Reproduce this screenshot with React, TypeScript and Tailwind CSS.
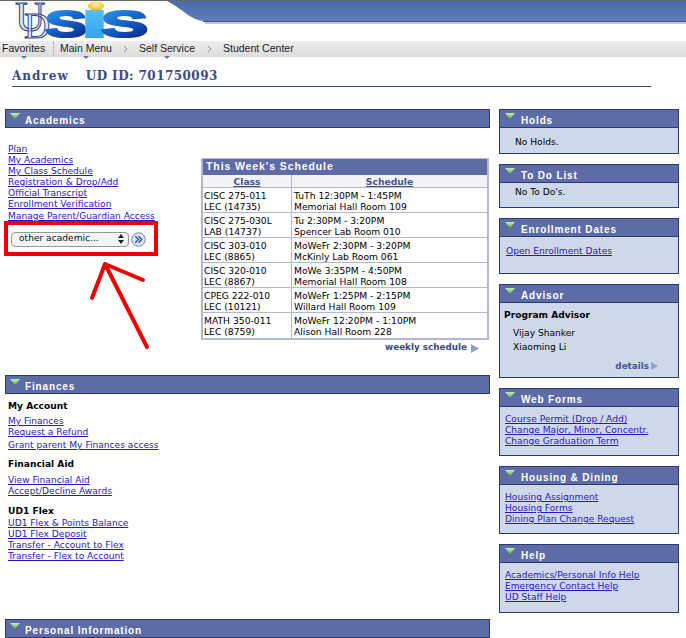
import type { ReactNode } from 'react';

const font = "font-['DejaVu_Sans',Verdana,sans-serif]";
const title = "font-['Liberation_Sans',Arial,sans-serif] text-white font-bold text-[10px] tracking-[0.85px]";

function Tri() {
    return (
        <svg width="10" height="6" viewBox="0 0 10 6" className="shrink-0">
            <defs>
                <linearGradient id="tri" x1="0" y1="0" x2="0" y2="1">
                    <stop offset="0" stopColor="#c4f2b4" />
                    <stop offset="1" stopColor="#4fb04a" />
                </linearGradient>
            </defs>
            <path d="M0 0 L10 0 L5 6 Z" fill="url(#tri)" />
        </svg>
    );
}

function Head({ title: text, right = false }: { title: string; right?: boolean }) {
    return (
        <div className={`h-[19px] flex bg-[#5d6ba6] border border-[#2a3a72] ${right ? 'pl-[5px] gap-[6px]' : 'pl-[4px] gap-[5px]'}`}>
            <div className="pt-[3px]"><Tri /></div>
            <span className={`${title} leading-[21px]`}>{text}</span>
        </div>
    );
}

function L({ children, className = '' }: { children: ReactNode; className?: string }) {
    return <a className={`block w-fit text-[#2a16c8] underline text-[9.1px] leading-[11px] ${className}`}>{children}</a>;
}

function Card({ title, h, children }: { title: string; h: string; children: ReactNode }) {
    return (
        <div className={`${h} bg-[#cdd8ea] border-x border-b border-[#2a3a72]`}>
            <div className="-mx-px"><Head title={title} right /></div>
            {children}
        </div>
    );
}

const rows = [
    ['CISC 275-011', 'LEC (14735)', 'TuTh 12:30PM - 1:45PM', 'Memorial Hall Room 109'],
    ['CISC 275-030L', 'LAB (14737)', 'Tu 2:30PM - 3:20PM', 'Spencer Lab Room 010'],
    ['CISC 303-010', 'LEC (8865)', 'MoWeFr 2:30PM - 3:20PM', 'McKinly Lab Room 061'],
    ['CISC 320-010', 'LEC (8867)', 'MoWe 3:35PM - 4:50PM', 'Memorial Hall Room 108'],
    ['CPEG 222-010', 'LEC (10121)', 'MoWeFr 1:25PM - 2:15PM', 'Willard Hall Room 109'],
    ['MATH 350-011', 'LEC (8759)', 'MoWeFr 12:20PM - 1:10PM', 'Alison Hall Room 228'],
];

function Schedule() {
    return (
        <div className="w-[288px]">
            <div className="border-2 border-[#b0b8d6] border-t border-x-[2px]">
                <div className="h-[16px] bg-[#5d6ba6] font-['Liberation_Sans',Arial,sans-serif] text-white font-bold text-[10.5px] tracking-[0.9px] leading-[15px] pl-[3px]">This Week's Schedule</div>
                <div className="grid grid-cols-[89px_1fr] h-[13px] bg-[#f4f4f4] border-b border-[#b0b8d6] text-[9.2px] font-bold leading-[14px] text-[#44568f] underline text-center">
                    <div className="border-r border-[#b0b8d6]">Class</div>
                    <div>Schedule</div>
                </div>
                {rows.map((r, i) => (
                    <div key={r[0]} className={`grid grid-cols-[89px_1fr] bg-white text-black text-[9.2px] leading-[11px] h-[25px] ${i < 5 ? 'border-b border-[#b0b8d6]' : ''}`}>
                        <div className="border-r border-[#b0b8d6] pl-[1px] pt-[2px]">{r[0]}<br />{r[1]}</div>
                        <div className="pl-[2px] pt-[2px]">{r[2]}<br />{r[3]}</div>
                    </div>
                ))}
            </div>
            <div className="flex justify-end items-center gap-[4px] pr-[10px] mt-[2px] h-[12px] text-[8.8px] font-bold text-[#3b4a80]">
                weekly schedule
                <svg width="8" height="10" viewBox="0 0 8 10"><path d="M0 1 L8 5.5 L0 10 Z" fill="#8ea0cc" /></svg>
            </div>
        </div>
    );
}

function Caret({ className }: { className: string }) {
    return <i className={`absolute top-[13px] border-x-[3px] border-x-transparent border-t-[3px] border-t-[#5a78b8] ${className}`} />;
}

function Chevron() {
    return (
        <span className="w-[15px]">
            <svg width="5" height="8" viewBox="0 0 5 8" className="-ml-[1px]"><path d="M1 1 L4 4 L1 7" fill="none" stroke="#8a8a8a" strokeWidth="1" /></svg>
        </span>
    );
}

export default function App() {
    return (
        <div className={`relative w-[686px] h-[638px] overflow-hidden bg-white ${font}`}>
            {/* top band + logo */}
            <div className="h-[41px] flex border-t border-[#666]">
                <svg width="165" height="40" viewBox="0 0 165 40" className="shrink-0">
                    <defs>
                        <linearGradient id="sis" x1="0" y1="0" x2="0.6" y2="1">
                            <stop offset="0" stopColor="#3aa6f0" />
                            <stop offset="0.45" stopColor="#1a6fd0" />
                            <stop offset="1" stopColor="#0a2a90" />
                        </linearGradient>
                        <linearGradient id="sisI" x1="0" y1="0" x2="0" y2="1">
                            <stop offset="0" stopColor="#5cc6f8" />
                            <stop offset="1" stopColor="#2a9cec" />
                        </linearGradient>
                        <radialGradient id="ball" cx="0.5" cy="0.35" r="0.7">
                            <stop offset="0" stopColor="#fff3a8" />
                            <stop offset="1" stopColor="#e2b21c" />
                        </radialGradient>
                    </defs>
                    <rect x="15" y="0" width="131" height="38" fill="#fdfdf6" />
                    <text x="15" y="30" fontFamily="'Liberation Serif',serif" fontSize="42" fill="#dfe8fb" stroke="#2d3f97" strokeWidth="1">U</text>
                    <text x="24" y="37" fontFamily="'Liberation Serif',serif" fontSize="36" fill="#dfe8fb" fillOpacity="0.6" stroke="#2d3f97" strokeWidth="1">D</text>
                    <g fontFamily="'Liberation Sans',sans-serif" fontWeight="700" fontSize="37" strokeWidth="2.2">
                        <text x="45" y="36" fill="url(#sis)" stroke="url(#sis)" textLength="42" lengthAdjust="spacingAndGlyphs">S</text>
                        <text x="82" y="36" fill="url(#sisI)" stroke="url(#sisI)" textLength="25" lengthAdjust="spacingAndGlyphs">I</text>
                        <text x="101" y="36" fill="url(#sis)" stroke="url(#sis)" textLength="47" lengthAdjust="spacingAndGlyphs">S</text>
                    </g>
                    <ellipse cx="96" cy="5" rx="8" ry="4.5" fill="url(#ball)" />
                </svg>
                <svg className="flex-1 h-[24px]" viewBox="0 0 521 24" preserveAspectRatio="none">
                    <defs>
                        <linearGradient id="band" x1="0" y1="0" x2="0" y2="1">
                            <stop offset="0" stopColor="#4a6aa8" />
                            <stop offset="1" stopColor="#5c80bd" />
                        </linearGradient>
                    </defs>
                    <path d="M2 0 L521 0 L521 20 L40 20 C26 20 18 8 2 0 Z" fill="url(#band)" />
                    <path d="M38 20.5 L521 20.5" stroke="#3d4a96" strokeWidth="1.2" />
                    <path d="M40 22 L521 22" stroke="#b5b5b5" strokeWidth="1.5" />
                </svg>
            </div>

            {/* nav */}
            <div className="h-[16px] bg-gradient-to-b from-[#eeeeee] to-[#dcdcdc] flex items-center pb-[1px] text-[10.5px] text-[#1a1a1a] font-['Liberation_Sans',Arial,sans-serif] leading-none">
                <span className="pl-[2px] relative w-[53px]">Favorites<Caret className="left-[21px]" /></span>
                <span className="h-[14px] border-l border-dotted border-[#999]" />
                <span className="pl-[6px] relative w-[70px]">Main Menu<Caret className="left-[29px]" /></span>
                <Chevron />
                <span className="relative w-[69px]">Self Service<Caret className="left-[25px]" /></span>
                <Chevron />
                <span>Student Center</span>
            </div>

            {/* name line */}
            <div className="ml-[12px] mr-[35px] mt-[10px] h-[20px] pt-[1px] border-b border-[#3a4a85] flex gap-[17px] font-['DejaVu_Serif',Georgia,serif] font-bold text-[12px] leading-[16px] text-[#3a4a85]">
                <span className="tracking-[1px]">Andrew</span>
                <span className="tracking-[0.45px]">UD ID: 701750093</span>
            </div>

            <div className="flex gap-[9px] ml-[5px] mt-[22px]">
                {/* left column */}
                <div className="w-[485px]">
                    <Head title="Academics" />
                    <div className="flex h-[247px]">
                        <div className="w-[196px] pt-[16px] pl-[3px]">
                            <L>Plan</L>
                            <L>My Academics</L>
                            <L>My Class Schedule</L>
                            <L>Registration &amp; Drop/Add</L>
                            <L>Official Transcript</L>
                            <L>Enrollment Verification</L>
                            <L className="mt-[1px]">Manage Parent/Guardian Access</L>
                            <div className="-ml-[4px] -mt-[1px] w-[154px] h-[35px] border-[4px] border-[#f00000] flex items-center gap-[2px] pl-[3px] pt-[1px]">
                                <div className="w-[118px] h-[15px] rounded-[4px] border border-[#999] bg-[#f4f4f4] flex items-center justify-between pl-[7px] pr-[4px] text-[9.1px] text-[#111]">
                                    other academic...
                                    <svg width="6" height="10" viewBox="0 0 6 10"><path d="M3 0 L6 4 L0 4 Z M3 10 L0 6 L6 6 Z" fill="#222" /></svg>
                                </div>
                                <svg width="15" height="15" viewBox="0 0 16 16">
                                    <circle cx="8" cy="8" r="7.2" fill="#dfe6f4" stroke="#6a7bb0" />
                                    <path d="M4.5 4.5 L8 8 L4.5 11.5 M8 4.5 L11.5 8 L8 11.5" fill="none" stroke="#2f4aa0" strokeWidth="1.4" />
                                </svg>
                            </div>
                        </div>
                        <div className="pt-[30px]"><Schedule /></div>
                    </div>

                    <Head title="Finances" />
                    <div className="pl-[3px] h-[225px] text-[9.1px]">
                        <div className="font-bold text-black leading-[11px] pt-[7px] mb-[4px]">My Account</div>
                        <L>My Finances</L>
                        <L>Request a Refund</L>
                        <L className="mt-[2px]">Grant parent My Finances access</L>
                        <div className="font-bold text-black leading-[11px] mt-[8px] mb-[5px]">Financial Aid</div>
                        <L>View Financial Aid</L>
                        <L>Accept/Decline Awards</L>
                        <div className="font-bold text-black leading-[11px] mt-[9px] mb-[1px]">UD1 Flex</div>
                        <L>UD1 Flex &amp; Points Balance</L>
                        <L>UD1 Flex Deposit</L>
                        <L>Transfer - Account to Flex</L>
                        <L>Transfer - Flex to Account</L>
                    </div>
                    <Head title="Personal Information" />
                </div>

                {/* right column */}
                <div className="w-[180px] flex flex-col gap-[10px] text-[9.1px] text-black">
                    <Card title="Holds" h="h-[45px]"><div className="pl-[15px] pt-[9px] leading-[11px]">No Holds.</div></Card>
                    <Card title="To Do List" h="h-[44px]"><div className="pl-[15px] pt-[4px] leading-[11px]">No To Do's.</div></Card>
                    <Card title="Enrollment Dates" h="h-[56px]"><div className="pl-[6px] pt-[9px]"><L>Open Enrollment Dates</L></div></Card>
                    <Card title="Advisor" h="h-[94px]">
                        <div className="pl-[4px] pt-[7px] font-bold leading-[11px]">Program Advisor</div>
                        <div className="pl-[13px] pt-[5px] leading-[14px]">Vijay Shanker<br />Xiaoming Li</div>
                        <div className="flex justify-end items-center gap-[2px] pr-[20px] pt-[7px] text-[8.8px] font-bold text-[#44568f] leading-[11px]">
                            details
                            <svg width="7" height="9" viewBox="0 0 7 9"><path d="M0 0 L7 4 L0 8 Z" fill="#8ea0cc" /></svg>
                        </div>
                    </Card>
                    <Card title="Web Forms" h="h-[68px]">
                        <div className="pl-[5px] pt-[7px]">
                            <L>Course Permit (Drop / Add)</L>
                            <L>Change Major, Minor, Concentr.</L>
                            <L>Change Graduation Term</L>
                        </div>
                    </Card>
                    <Card title="Housing &amp; Dining" h="h-[68px]">
                        <div className="pl-[5px] pt-[7px]">
                            <L>Housing Assignment</L>
                            <L>Housing Forms</L>
                            <L>Dining Plan Change Request</L>
                        </div>
                    </Card>
                    <Card title="Help" h="h-[69px]">
                        <div className="pl-[5px] pt-[7px]">
                            <L>Academics/Personal Info Help</L>
                            <L>Emergency Contact Help</L>
                            <L>UD Staff Help</L>
                        </div>
                    </Card>
                </div>
            </div>

            {/* hand drawn arrow annotation */}
            <svg className="absolute left-0 top-0 pointer-events-none" width="686" height="638" viewBox="0 0 686 638">
                <path d="M105 264 L92 298 M105 264 L143 280 M105 264 L147 347" fill="none" stroke="#f00000" strokeWidth="4" strokeLinecap="round" />
            </svg>
        </div>
    );
}
